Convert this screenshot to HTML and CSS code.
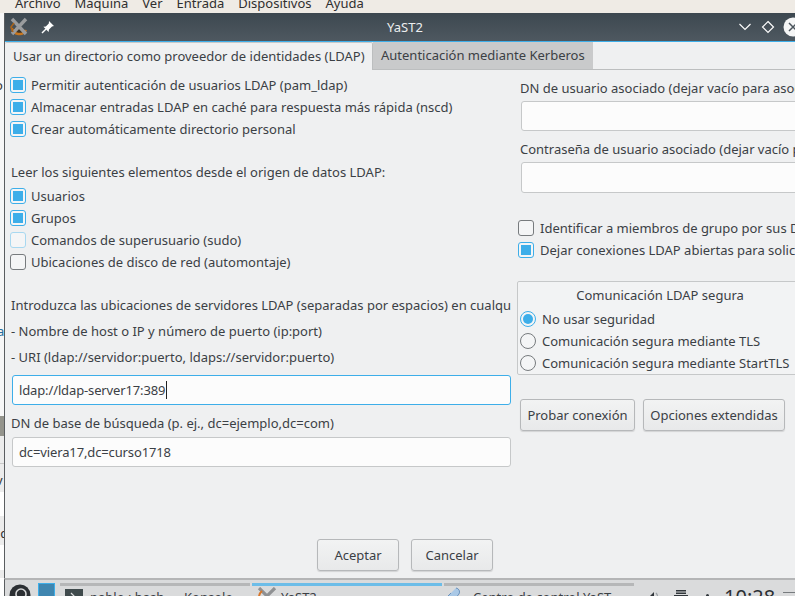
FILE: index.html
```html
<!DOCTYPE html>
<html lang="es">
<head>
    <meta charset="UTF-8">
    <title>YaST2</title>
    <link rel="stylesheet" href="styles.css">
</head>
<body>
    <div id="desktop">
        <!-- menu of the window behind, cut off at the top -->
        <div id="menubar">
            <span>Archivo</span>
            <span>Máquina</span>
            <span>Ver</span>
            <span>Entrada</span>
            <span>Dispositivos</span>
            <span>Ayuda</span>
        </div>
        <div id="stage">
            <span class="peek peek-1">o</span>
            <span class="peek peek-2">a</span>
            <span class="peek peek-3">v</span>
            <span class="peek peek-4">ld</span>
            <div id="window">
                <div id="titlebar">
                    <svg class="logo" viewBox="0 0 20 20" width="20" height="20">
                        <path d="M3 11a7.5 7.5 0 0 0 14 2" fill="#3a3328" stroke="#c8761e" stroke-width="2.4"/>
                        <path d="M3 2l14 15M17 2L3 17" stroke="#9a9c9e" stroke-width="3.4"/>
                        <path d="M5 6L2 10l2 5" fill="none" stroke="#a8631c" stroke-width="1.6"/>
                    </svg>
                    <svg class="pin" viewBox="0 0 14 14" width="14" height="14">
                        <path d="M8 1l5 5-2 .6-3 3-.4 2.4L2.4 6.8 4.8 6.4l3-3z" fill="#fff"/>
                        <path d="M5 9l-4 4" stroke="#fff" stroke-width="1.4"/>
                    </svg>
                    <div class="wintitle">YaST2</div>
                    <svg class="winbtn btn-down" viewBox="0 0 14 14" width="14" height="14">
                        <path d="M1.5 4L7 9.5 12.5 4" fill="none" stroke="#fcfcfc" stroke-width="1.2"/>
                    </svg>
                    <svg class="winbtn btn-keep" viewBox="0 0 14 14" width="14" height="14">
                        <path d="M7 1.5L12.5 7 7 12.5 1.5 7z" fill="none" stroke="#fcfcfc" stroke-width="1.2"/>
                    </svg>
                    <svg class="winbtn btn-close" viewBox="0 0 20 20" width="20" height="20">
                        <circle cx="10" cy="10" r="9.5" fill="#f4f5f5"/>
                        <path d="M6 6l8 8M14 6l-8 8" stroke="#4a545c" stroke-width="1.5"/>
                    </svg>
                </div>
                <div id="tabs">
                    <div class="tab active">Usar un directorio como proveedor de identidades (LDAP)</div>
                    <div class="tab">Autenticación mediante Kerberos</div>
                </div>
                <div id="content">
                    <div class="col-left">
                        <label class="check"><i class="box on"></i>Permitir autenticación de usuarios LDAP (pam_ldap)</label>
                        <label class="check"><i class="box on"></i>Almacenar entradas LDAP en caché para respuesta más rápida (nscd)</label>
                        <label class="check"><i class="box on"></i>Crear automáticamente directorio personal</label>

                        <div class="heading">Leer los siguientes elementos desde el origen de datos LDAP:</div>
                        <label class="check"><i class="box on"></i>Usuarios</label>
                        <label class="check"><i class="box on"></i>Grupos</label>
                        <label class="check"><i class="box faded"></i>Comandos de superusuario (sudo)</label>
                        <label class="check"><i class="box"></i>Ubicaciones de disco de red (automontaje)</label>

                        <div class="line intro">Introduzca las ubicaciones de servidores LDAP (separadas por espacios) en cualquiera</div>
                        <div class="line para">- Nombre de host o IP y número de puerto (ip:port)</div>
                        <div class="line para">- URI (ldap://servidor:puerto, ldaps://servidor:puerto)</div>
                        <div class="field focus server"><span class="caret">ldap://ldap-server17:389</span></div>
                        <div class="line base-label">DN de base de búsqueda (p. ej., dc=ejemplo,dc=com)</div>
                        <div class="field">dc=viera17,dc=curso1718</div>
                    </div>
                    <div class="col-right">
                        <div class="line r-label">DN de usuario asociado (dejar vacío para asociación anónima)</div>
                        <div class="field r-field"></div>
                        <div class="line r-label second">Contraseña de usuario asociado (dejar vacío para asociación anónima)</div>
                        <div class="field r-field tall"></div>
                        <div class="r-checks">
                            <label class="check"><i class="box"></i>Identificar a miembros de grupo por sus DN</label>
                            <label class="check"><i class="box on"></i>Dejar conexiones LDAP abiertas para solicitudes</label>
                        </div>
                        <div class="group">
                            <div class="group-title">Comunicación LDAP segura</div>
                            <label class="radio"><i class="dot on"></i>No usar seguridad</label>
                            <label class="radio"><i class="dot"></i>Comunicación segura mediante TLS</label>
                            <label class="radio"><i class="dot"></i>Comunicación segura mediante StartTLS</label>
                        </div>
                        <div class="r-buttons">
                            <button class="btn w-probar">Probar conexión</button>
                            <button class="btn w-opciones">Opciones extendidas</button>
                        </div>
                    </div>
                </div>
                <div id="footer">
                    <button class="btn w-main">Aceptar</button>
                    <button class="btn w-main">Cancelar</button>
                </div>
            </div>
        </div>
        <div id="panel">
            <svg class="launcher" viewBox="0 0 22 22" width="22" height="22">
                <circle cx="11" cy="11" r="10.5" fill="#2b2f33"/>
                <circle cx="12" cy="10" r="5" fill="none" stroke="#d5d6d7" stroke-width="1.6"/>
            </svg>
            <div class="pager"></div>
            <div class="tasks">
                <div class="task">
                    <svg class="task-ico" viewBox="0 0 18 18" width="18" height="18">
                        <rect width="18" height="18" fill="#3f4a4c"/>
                        <path d="M6 4l4 4" stroke="#ddd" stroke-width="1.2"/>
                    </svg>
                    <span class="t1">pablo : bash — Konsole</span>
                </div>
                <div class="task current">
                    <svg class="task-ico ico-yast" viewBox="0 0 20 20" width="20" height="20">
                        <path d="M2 1l16 16M18 1L2 17" stroke="#8f9193" stroke-width="3.2"/>
                        <path d="M2 10a8 8 0 0 1 3-6" fill="none" stroke="#d9772a" stroke-width="2"/>
                    </svg>
                    <span class="t2">YaST2</span>
                </div>
                <div class="task">
                    <svg class="task-ico ico-centro" viewBox="0 0 14 14" width="14" height="14">
                        <path d="M9 1a4 4 0 0 1 3 6L7 13 3 13 1 9l3-3" fill="#a9c8e6" stroke="#6b93bd"/>
                    </svg>
                    <span class="t3">Centro de control YaST</span>
                </div>
            </div>
            <div class="tray">
                <svg class="tray-sound" viewBox="0 0 16 16" width="16" height="16">
                    <path d="M1 8h3l5-5v12l-5-5H1z" fill="#31363b"/>
                    <path d="M11 4a6 6 0 0 1 0 8" fill="none" stroke="#9aa0a5" stroke-width="1.3"/>
                </svg>
                <svg class="tray-print" viewBox="0 0 16 16" width="16" height="16">
                    <path d="M3 1h10v4H3zM1 6h14v7H1z" fill="#31363b"/>
                    <path d="M3 3h10" stroke="#d8d9da"/>
                </svg>
                <i class="tray-dot"></i>
                <span class="clock">10:28</span>
                <i class="tray-dash"></i>
            </div>
        </div>
    </div>
</body>
</html>
```

FILE: styles.css
```css
*{
    margin: 0;
    padding: 0;
    box-sizing: border-box;
}
html,body{
    width: 795px;
    height: 596px;
    overflow: hidden;
}
body{
    font-family: "Noto Sans", sans-serif;
    font-size: 13px;
    color: #3b4045;
}
#desktop{
    width: 795px;
    height: 596px;
    display: flex;
    flex-direction: column;
    overflow: hidden;
}
#menubar{
    height: 13px;
    flex: none;
    display: flex;
    align-items: flex-end;
    gap: 14px;
    padding-left: 15px;
    background-color: #efebe5;
    line-height: 20px;
    color: #2f2f2f;
    overflow: hidden;
}
/* what is visible of the windows behind, a 4px strip on the left */
#stage{
    flex: 1;
    position: relative;
    background: linear-gradient(to bottom,
        #f7f7f7 0, #f7f7f7 403px,
        #94948c 403px, #94948c 423px,
        #ececec 423px, #ececec 450px,
        #c9c9c9 450px, #c9c9c9 451px,
        #ececec 451px, #ececec 479px,
        #ffffff 479px, #ffffff 503px,
        #ececec 503px, #ececec 532px,
        #ffffff 532px, #ffffff 557px,
        #ececec 557px);
}
.peek{
    position: absolute;
    line-height: 14px;
    color: #333;
}
.peek-1{ left: -5px; top: 65px; }
.peek-2{ left: -3px; top: 311px; color: #2a6f9e; }
.peek-3{ left: -4px; top: 460px; }
.peek-4{ left: -3px; top: 513px; }

#window{
    position: absolute;
    left: 4px;
    top: 0;
    width: 801px;
    height: 565px;
    display: flex;
    flex-direction: column;
    border-left: 1px solid #5a5d60;
    background-color: #eff0f1;
}
#titlebar{
    height: 29px;
    flex: none;
    position: relative;
    background: linear-gradient(to bottom, #3d4850, #4e5860);
    border-bottom: 1px solid #3daee9;
}
.logo{
    position: absolute;
    left: 4px;
    top: 4px;
}
.pin{
    position: absolute;
    left: 36px;
    top: 7px;
}
.wintitle{
    text-align: center;
    line-height: 28px;
    color: #eceeef;
}
.winbtn{
    position: absolute;
}
.btn-down{ left: 733px; top: 7px; }
.btn-keep{ left: 756px; top: 7px; }
.btn-close{ left: 778px; top: 4px; }

#tabs{
    height: 28px;
    flex: none;
    display: flex;
    border-bottom: 1px solid #bcbebf;
}
.tab{
    height: 27px;
    padding: 0 8px;
    line-height: 27px;
    background-color: #c9cacb;
    white-space: nowrap;
}
.tab.active{
    width: 368px;
    height: 28px;
    padding: 0 8px;
    background-color: #eff0f1;
    border-top: 1px solid #c6c8c9;
    border-right: 1px solid #bcbebf;
    border-radius: 2px 2px 0 0;
    line-height: 26px;
    position: relative;
}
.tab:not(.active){
    width: 220px;
    margin-left: 0;
}

#content{
    flex: 1;
    display: flex;
    gap: 6px;
    min-height: 0;
}
.col-left{
    width: 506px;
    flex: none;
    padding: 4px 0 0 5px;
    overflow: hidden;
}
.col-right{
    width: 288px;
    flex: none;
    overflow: hidden;
    white-space: nowrap;
}
.check,.radio{
    display: flex;
    align-items: center;
    gap: 5px;
    height: 22px;
    white-space: nowrap;
}
.box{
    width: 16px;
    height: 16px;
    flex: none;
    border: 1px solid #777b7e;
    border-radius: 3px;
    background-color: #f4f5f6;
    display: flex;
    align-items: center;
    justify-content: center;
}
.box.on{
    border-color: #3daee9;
}
.box.on::after{
    content: '';
    width: 10px;
    height: 10px;
    background-color: #3daee9;
}
.box.faded{
    border-color: #a8d8f0;
}
.heading{
    margin-top: 21px;
    margin-bottom: 2px;
    padding-left: 1px;
    line-height: 22px;
    white-space: nowrap;
}
.line{
    line-height: 18px;
    white-space: nowrap;
}
.col-left>.line{
    padding-left: 1px;
}
.intro{
    margin-top: 23px;
}
.para{
    margin-top: 8px;
}
.field{
    height: 30px;
    border: 1px solid #c6c8c9;
    border-radius: 3px;
    background-color: #fcfcfc;
    padding-left: 6px;
    line-height: 28px;
    letter-spacing: -0.13px;
    white-space: nowrap;
}
.field.focus{
    border-color: #3daee9;
}
.server{
    margin: 9px 0 0 2px;
}
.col-left>.field{
    width: 499px;
    margin-left: 2px;
}
.caret{
    border-right: 1px solid #222;
    padding-right: 1px;
    display: inline-block;
    height: 18px;
    line-height: 18px;
}
.base-label{
    margin-top: 9px;
    margin-bottom: 5px;
}
.r-label{
    margin: 9px 0 0 3px;
}
.r-label.second{
    margin-top: 9px;
}
.r-field{
    width: 290px;
    margin: 4px 0 0 4px;
}
.r-field.tall{
    height: 31px;
}
.r-checks{
    margin: 24px 0 0 1px;
}
.r-checks .check{
    gap: 6px;
}
.group{
    width: 286px;
    height: 94px;
    margin-top: 20px;
    border: 1px solid #c6c8c9;
    border-radius: 2px;
    background-color: #f2f3f4;
}
.group-title{
    height: 26px;
    padding-top: 4px;
    line-height: 18px;
    text-align: center;
}
.radio{
    padding-left: 2px;
    gap: 6px;
}
.dot{
    width: 16px;
    height: 16px;
    flex: none;
    border: 1px solid #777b7e;
    border-radius: 50%;
    background-color: #f4f5f6;
    display: flex;
    align-items: center;
    justify-content: center;
}
.dot.on{
    border-color: #3daee9;
}
.dot.on::after{
    content: '';
    width: 10px;
    height: 10px;
    border-radius: 50%;
    background-color: #3daee9;
}
.btn{
    height: 32px;
    border: 1px solid #b6b8ba;
    border-radius: 3px;
    background: linear-gradient(to bottom, #f2f3f3, #e8e9ea);
    box-shadow: 0 1px 1px rgba(0,0,0,.12);
    font-family: inherit;
    font-size: 13px;
    color: #3b4045;
}
.r-buttons{
    display: flex;
    gap: 8px;
    margin: 24px 0 0 3px;
}
.w-probar{ width: 115px; }
.w-opciones{ width: 142px; }
.w-main{ width: 82px; }
#footer{
    flex: none;
    display: flex;
    justify-content: center;
    gap: 12px;
    padding-bottom: 7px;
}

#panel{
    height: 18px;
    flex: none;
    margin-left: 4px;
    display: flex;
    align-items: flex-start;
    border-left: 1px solid #5a5d60;
    border-top: 2px solid #b4b5b6;
    background-color: #dadbdc;
    overflow: hidden;
}
.launcher{
    margin: 4px 0 0 4px;
    flex: none;
}
.pager{
    width: 17px;
    height: 20px;
    flex: none;
    margin: 3px 0 0 7px;
    background-color: #3f86b0;
    border: 1px solid #3daee9;
}
.tasks{
    display: flex;
    gap: 2px;
    margin: 3px 0 0 5px;
    flex: none;
}
.task{
    width: 190px;
    height: 40px;
    flex: none;
    display: flex;
    align-items: flex-start;
    border-top: 3px solid #b6b7b8;
    white-space: nowrap;
}
.task.current{
    border-top-color: #6cbde8;
}
.task-ico{
    flex: none;
    margin: 3px 0 0 5px;
}
.ico-yast{
    margin: 1px 0 0 5px;
}
.ico-centro{
    margin: 1px 0 0 3px;
}
.task span{
    line-height: 18px;
    margin-top: 2px;
}
.t1{ margin-left: 7px; }
.t2{ margin-left: 4px; }
.t3{ margin-left: 12px; }
.tray{
    display: flex;
    align-items: flex-start;
    margin-left: 11px;
    flex: none;
}
.tray-sound{
    margin-top: 9px;
    flex: none;
}
.tray-print{
    margin: 9px 0 0 12px;
    flex: none;
}
.tray-dot{
    width: 3px;
    height: 3px;
    flex: none;
    margin: 14px 0 0 17px;
    border-radius: 50%;
    background-color: #31363b;
}
.clock{
    margin: 3px 0 0 15px;
    font-size: 20px;
    line-height: 28px;
    color: #2b2f33;
}
.tray-dash{
    width: 12px;
    height: 1px;
    flex: none;
    margin: 12px 0 0 8px;
    background-color: #777b7e;
}
```
